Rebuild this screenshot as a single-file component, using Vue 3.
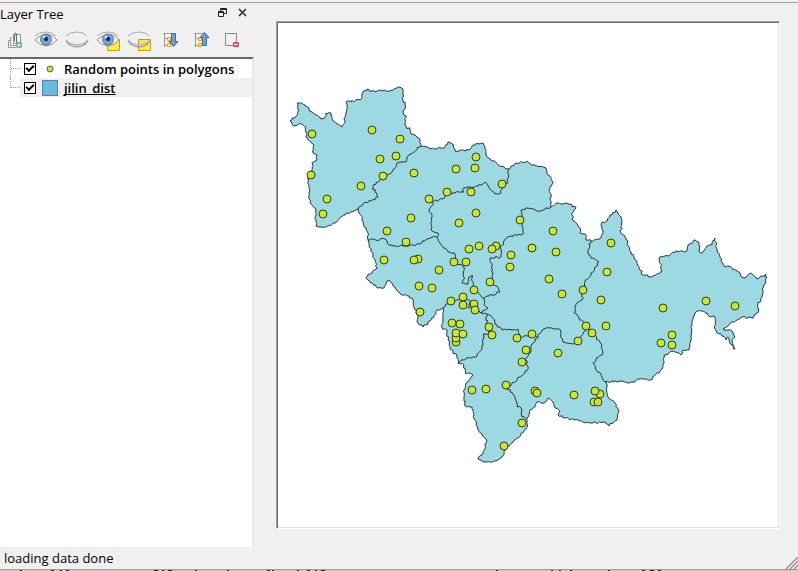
<script setup>
import { ref } from 'vue'

const pointsVisible = ref(true)
const districtsVisible = ref(true)

// Adds the small deterministic irregularities of a surveyed boundary.
function boundary(text, closed = false) {
  const nodes = text.trim().split(/\s+/).map((pair) => pair.split(',').map(Number))
  if (closed) nodes.push(nodes[0])
  let seed = 17
  const noise = () => {
    seed = (seed * 1103515245 + 12345) % 2147483648
    return seed / 2147483648 - 0.5
  }
  let path = `M${nodes[0].join(',')}`
  for (let i = 1; i < nodes.length; i++) {
    const [x1, y1] = nodes[i - 1]
    const [x2, y2] = nodes[i]
    const count = Math.max(1, Math.round(Math.hypot(x2 - x1, y2 - y1) / 2))
    for (let j = 1; j < count; j++) {
      const t = j / count
      const x = x1 + (x2 - x1) * t + noise() * 2.2
      const y = y1 + (y2 - y1) * t + noise() * 2.2
      path += `L${x.toFixed(1)},${y.toFixed(1)}`
    }
    path += `L${x2},${y2}`
  }
  return closed ? path + 'Z' : path
}

const outline = boundary(`
290,121 294,118 297,115 299,110 297,103 299,103 305,105 309,109 312,112 317,115 321,119 325,117 326,113 331,113 332,119 335,122 342,127 345,121 345,117 347,112 346,102 360,100 363,92 367,89 372,91 382,91 393,90 399,87 403,89 403,100 405,105 403,112 406,116 405,125 410,130 411,134 415,135 420,140 421,146
428,147 430,149 445,147 448,142 453,144 455,151 469,150 473,145 480,144 483,143 485,147 486,154 492,161 500,166 508,169 517,163 527,161 533,165 546,168 548,175 553,182 549,190 551,197 550,208
558,203 570,204 576,208 572,213 573,220 579,227 580,233 585,234 586,240 591,241 601,238 603,233 602,222 607,221 610,215 616,210 621,217 621,233 626,238 629,247
631,252 637,262 643,275 651,277 661,272 660,257 668,256 673,252 687,251 688,245 695,240 699,243 699,251 702,253 707,246 712,245 715,238 717,250 724,266 732,268 740,273 744,278 751,273 757,279 766,274 766,282 763,288 762,297 757,307 759,312 754,315 753,318 742,317 732,322 723,329 732,331 735,337 732,341 735,349 732,345 728,337 726,340 722,336 715,329 715,317 709,316 707,313 698,311 695,313 692,325 691,337 689,350 683,350 681,355 675,352 670,352 664,357 663,368 657,373 650,380 640,379 630,383 620,381 605,382
607,387 608,397 615,403 619,412 617,420 609,426 603,422 593,423 585,423 575,420 565,418 558,415 559,410 555,408 553,402 548,398 544,403 537,402 535,407 530,410 527,418 527,427
517,438 507,447 502,457 495,461 485,462 478,459 483,453 487,441 482,434 476,425 472,407 465,406 464,390 467,382 473,375 465,373 463,364 458,363 457,355 450,349 448,340 447,330 442,328
443,308 437,310 430,321 423,327 418,323 418,317 414,307 412,298 400,293 390,281 387,281 384,288 379,288 372,283 366,278 368,274 372,273 377,268 373,255 369,245 368,233 363,222 358,209
345,215 335,223 322,227 316,226 316,211 310,203 309,193 308,180 312,170 312,163 317,160 317,156 313,153 314,145 307,138 306,127 302,124 294,126`, true)

const borders = [
  '421,146 407,157 406,162 400,162 397,163 392,172 383,176 380,180 373,187 378,197 363,204 358,209',
  '368,240 385,239 389,245 405,246 420,244 427,239 437,237',
  '508,169 508,183 502,187 501,193 497,194 490,189 485,182 478,186 470,187 463,189 464,192 455,193 448,193 442,199 433,202 429,210 432,217 431,230 438,233 437,237 440,243 448,252 454,253 455,262 464,267 464,277 462,283 468,284 469,277 472,275 472,281 474,288 483,298',
  '550,208 537,211 528,208 521,210 523,228 523,234 508,237 500,247 501,257 490,258 493,273 491,283 498,287 500,292 492,295 483,298 484,305 488,308 482,313 476,310',
  '443,308 451,301 463,300 469,300 472,304 468,308 470,302 475,309 482,313 487,314 487,325 489,334 483,334 483,345 477,356 467,358 458,363',
  '487,314 491,316 497,325 502,330 518,329 519,337 533,335 538,337 542,330 550,328 559,329 563,342 573,344 580,338 588,328',
  '591,241 588,250 591,258 599,262 585,282 582,300 575,306 574,313 586,325 595,335 600,342 603,353 593,363 598,372 605,382',
  '538,337 532,344 531,352 526,358 528,369 510,386 507,387 515,397 517,407 521,408 522,417 527,419'
].map((line) => boundary(line))

const points = `
312,134 372,130 400,139 380,159 396,156 383,176 311,175 361,186 327,199 323,214 414,173 429,199 411,218 387,231 406,242
476,157 456,169 475,168 447,192 471,192 502,184 476,213 459,223 520,220 469,249 479,246 496,246 492,249 511,255 510,267
532,248 556,252 553,231 549,279 562,294 583,290 611,243 607,272 601,300 606,326 586,326 592,333 578,341
384,260 418,259 414,260 439,270 454,262 466,262 419,286 432,288 490,282 474,290 451,301 463,297 463,305 474,304 475,310
420,312 452,323 460,324 456,342 456,338 456,333 463,334 489,327 492,335 517,338 532,334 526,350 522,362 558,353
472,390 486,389 506,385 535,391 537,393 574,395 600,394 595,391 594,402 598,402 522,423 504,446
663,308 706,301 735,306 672,335 661,343 672,345`.trim().split(/\s+/).map((p) => p.split(',').map(Number))
</script>

<template>
  <div class="window">
    <main class="workspace">
      <aside class="dock">
        <header class="dock-title">
          <h1>Layer Tree</h1>
          <button type="button" aria-label="Float panel">
            <svg width="9" height="9" viewBox="0 0 9 9" fill="none" stroke="#222">
              <path d="M2.5 3V.5h6v5H6M2.5 1.5h6M.5 3.5h5v5h-5zM.5 4.5h5" />
            </svg>
          </button>
          <button type="button" aria-label="Close panel">
            <svg width="9" height="9" viewBox="0 0 9 9" stroke="#333" stroke-width="1.700"><path d="M1 1l7 7M8 1L1 8" /></svg>
          </button>
        </header>

        <div class="toolbar">
          <button type="button" aria-label="Add group">
            <svg width="24" height="24" viewBox="0 0 24 24" fill="none" stroke="#969b99">
              <path d="M10 6.500h7.500v8M10.500 6.500v9H14M9 9.500H7.500v8H13M7 12.500H5.500v7H13" />
              <path d="M11.500 13.500V7q0-2 1-2t1 2v8" stroke="#47739a" />
              <rect x="14" y="15" width="4" height="4" fill="#fff" stroke="#67a777" stroke-width="1.500" />
            </svg>
          </button>
          <button v-for="kind in ['open', 'closed', 'open-box', 'closed-box']" :key="kind" type="button" :aria-label="kind.startsWith('open') ? 'Show layers' : 'Hide layers'">
            <svg width="24" height="24" viewBox="0 0 24 24" fill="none">
              <path v-if="kind.endsWith('box')" d="M11.500 11.500h12v11h-12z" fill="#ffe750" stroke="#c5a000" />
              <template v-if="kind.startsWith('open')">
                <path d="M1 12Q7 6 14 6.500q5 0 9 5.500-4 5-11 6-7-1-11-6z" fill="#f5f5f3" stroke="#8b8b87" />
                <path d="M1 8Q5 4 12 4t10 4" stroke="#aaa" />
                <circle cx="12" cy="11.500" r="5.500" fill="#7ba5d6" stroke="#55799f" />
                <circle cx="12" cy="11" r="2.300" fill="#17365d" />
                <circle cx="10" cy="9" r="1.200" fill="#dbeaff" />
              </template>
              <template v-else>
                <path d="M1 8Q5 4 12 4t10 4" stroke="#aaa" />
                <path d="M1 12q4 5 11 5t11-5" stroke="#bdbdba" stroke-width="2" />
                <path d="M1 13q4 6 11 6t11-6M4 16l-1 1M20 16l1 1" stroke="#8c8c89" />
              </template>
            </svg>
          </button>
          <button v-for="direction in ['down', 'up']" :key="direction" type="button" :aria-label="direction === 'down' ? 'Expand all' : 'Collapse all'">
            <svg width="24" height="24" viewBox="0 0 24 24" fill="none">
              <path d="M5 5.500h10M6.500 5v14M6 10.500h4M6 17.500h4" stroke="#999" />
              <path d="M9.500 9.500h3v3h-3zM9.500 15.500h3v3h-3z" fill="#fff2c4" stroke="#ff9c00" />
              <path v-if="direction === 'down'" d="M13.500 5.500h4v8h2.500l-4.500 5-4.500-5h2.500z" fill="#6ca0d4" stroke="#426c9d" />
              <path v-else d="M13.500 17.500v-8H11l4.500-5 4.500 5h-2.500v8z" fill="#6ca0d4" stroke="#426c9d" />
            </svg>
          </button>
          <button type="button" aria-label="Remove layer">
            <svg width="24" height="24" viewBox="0 0 24 24" fill="none">
              <path d="M5.500 5.500h11v12h-11z" stroke="#888" />
              <rect x="13" y="14" width="6" height="5" rx="1" fill="#ef4b55" />
              <path d="M14 16.500h4" stroke="#fff" />
            </svg>
          </button>
        </div>

        <ul class="tree">
          <li>
            <span class="branch"></span>
            <label>
              <input v-model="pointsVisible" type="checkbox" />
              <span class="symbol"><svg width="8" height="8" viewBox="0 0 8 8"><circle cx="4" cy="4" r="3" fill="#c4e33c" stroke="#60664a" /></svg></span>
              <span>Random points in polygons</span>
            </label>
          </li>
          <li class="current">
            <span class="branch last"></span>
            <label>
              <input v-model="districtsVisible" type="checkbox" />
              <span class="symbol swatch"></span>
              <span class="name">jilin_dist</span>
            </label>
          </li>
        </ul>
      </aside>

      <section class="canvas" aria-label="Map canvas">
        <svg viewBox="278 23 500 504" role="img" aria-label="Map">
          <g v-if="districtsVisible" stroke="#283437" stroke-width="1" stroke-linejoin="round">
            <path :d="outline" fill="#9dd9e2" />
            <path v-for="(line, i) in borders" :key="i" :d="line" fill="none" />
          </g>
          <g v-if="pointsVisible" fill="#c8e632" stroke="#35400f">
            <circle v-for="(p, i) in points" :key="i" :cx="p[0]" :cy="p[1]" r="4" />
          </g>
        </svg>
      </section>
    </main>

    <footer class="status">
      <span>loading data done</span>
      <svg class="grip" width="13" height="13" viewBox="0 0 13 13" stroke="#969696" stroke-width="1.500">
        <path d="M1 13L13 1M5 13l8-8M9 13l4-4" />
      </svg>
    </footer>
    <div class="backdrop">
      <svg width="700" height="1" viewBox="0 0 700 1" stroke="#333">
        <path d="M20 .5h2M51 .5h3M60 .5h2M66 .5h3M154 .5h4M162 .5h2M168 .5h4M195 .5h2M227 .5h2M267 .5h3M272 .5h2M297 .5h2M307 .5h3M315 .5h2M321 .5h4M496 .5h2M551 .5h2M559 .5h2M570 .5h2M608 .5h2M642 .5h3M650 .5h4M658 .5h3" />
      </svg>
    </div>
  </div>
</template>

<style>
body {
  margin: 0;
  background: #f0f0f0;
}
</style>

<style scoped>
.window {
  box-sizing: border-box;
  display: flex;
  flex-direction: column;
  min-height: 100vh;
  padding-top: 2px;
  color: #000;
  background: #f0f0f0;
  font: 13px/16px "Open Sans", "Noto Sans", sans-serif;
}

.workspace {
  flex: 1;
  display: grid;
  grid-template-columns: 254px 1fr;
  border-top: 1px solid #a0a0a0;
}

.dock {
  display: flex;
  flex-direction: column;
}

.dock-title {
  display: flex;
  align-items: center;
  gap: 11px;
  height: 22px;
  padding-right: 7px;
}

h1 {
  flex: 1;
  margin: 0;
  font-size: 13px;
  font-weight: 400;
}

button {
  display: grid;
  place-items: center;
  padding: 0;
  border: 0;
  background: none;
}

.dock-title button {
  height: 18px;
  align-self: flex-start;
}

.toolbar {
  display: flex;
  gap: 7px;
  padding: 3px 3px 5px;
}

.toolbar svg {
  display: block;
}

.tree {
  flex: 1;
  margin: 0;
  padding: 0;
  list-style: none;
  background: #fff;
  border: solid;
  border-width: 2px 2px 1px 0;
  border-color: #696969 #e8e8e8 #fff #fff;
  font-weight: 600;
}

.tree li {
  display: flex;
  height: 19px;
}

.branch {
  box-sizing: border-box;
  width: 10px;
  margin-left: 10px;
  border-left: 1px dotted #999;
  background: linear-gradient(90deg, #999 50%, transparent 50%) 0 9px / 2px 1px repeat-x;
}

.branch.last {
  height: 10px;
}

.tree label {
  flex: 1;
  display: flex;
  align-items: center;
  padding-left: 4px;
}

.current label {
  background: #f0f0f0;
}

.tree input {
  appearance: none;
  display: grid;
  place-items: center;
  box-sizing: border-box;
  width: 12px;
  height: 12px;
  margin: 0 6px 0 0;
  border: 1px solid #000;
  background: #fff;
}

.tree input:checked::after {
  content: "";
  width: 6px;
  height: 3px;
  border: solid #000;
  border-width: 0 0 2px 2px;
  transform: translateY(-1px) rotate(-45deg);
}

.symbol {
  display: grid;
  place-items: center;
  width: 16px;
  height: 16px;
  margin-right: 6px;
}

.swatch {
  box-sizing: border-box;
  border: 1px solid #4b88a8;
  background: #6cb8df;
}

.name {
  text-decoration: underline;
  text-decoration-skip-ink: none;
}

.canvas {
  display: flex;
  margin: 18px 18px 18px 22px;
  padding: 1px;
  background: #fff;
  border: 1px solid;
  border-color: #a0a0a0 #fff #fff #a0a0a0;
  box-shadow: inset 1px 1px #696969, inset -1px -1px #e3e3e3;
}

.canvas svg {
  width: 100%;
}

.status {
  display: flex;
  align-items: center;
  justify-content: space-between;
  height: 22px;
  padding-left: 4px;
}

.grip {
  align-self: flex-end;
}

.backdrop {
  display: flex;
  background: #c8c8c8;
  border-top: 1px solid #999;
}
</style>
